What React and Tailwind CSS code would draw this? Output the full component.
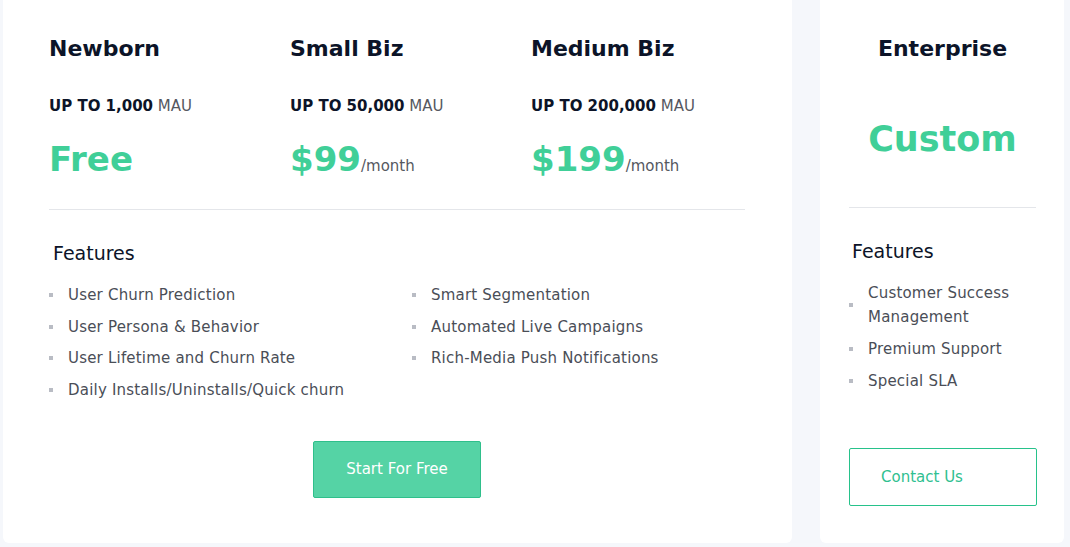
import React from "react";

const plans = [
  { name: "Newborn", limit: "UP TO 1,000", price: "Free", per: false },
  { name: "Small Biz", limit: "UP TO 50,000", price: "$99", per: true },
  { name: "Medium Biz", limit: "UP TO 200,000", price: "$199", per: true },
];

const leftFeatures = [
  "User Churn Prediction",
  "User Persona & Behavior",
  "User Lifetime and Churn Rate",
  "Daily Installs/Uninstalls/Quick churn",
];

const rightFeatures = [
  "Smart Segmentation",
  "Automated Live Campaigns",
  "Rich-Media Push Notifications",
];

const enterpriseFeatures = [
  "Customer Success Management",
  "Premium Support",
  "Special SLA",
];

const Bullet = () => (
  <span className="w-[4px] h-[4px] bg-[#b9bcc4] shrink-0" />
);

const FeatureItem = ({ text }) => (
  <li className="flex items-center gap-[15px] text-[15px] leading-[24px] text-[#4a4e57] tracking-[0.2px]">
    <Bullet />
    <span>{text}</span>
  </li>
);

const App = () => {
  return (
    <div
      className="w-[1070px] h-[547px] bg-[#f5f7fb] flex pl-[3px] overflow-hidden"
      style={{ fontFamily: '"DejaVu Sans", sans-serif' }}
    >
      {/* plans card */}
      <div className="w-[789px] h-[543px] bg-white rounded-b-md pl-[46px] pt-[33px]">
        <div className="grid grid-cols-[241px_241px_214px] w-[696px]">
          {plans.map((p) => (
            <div key={p.name}>
              <h2 className="text-[22px] leading-8 font-bold text-[#0c1428]">
                {p.name}
              </h2>
              <p className="mt-[31px] text-[15px] leading-5 text-[#0c1428]">
                <span className="font-bold">{p.limit}</span>{" "}
                <span className="text-[#55585f]">MAU</span>
              </p>
              <div className="mt-[21px] h-[44px] flex items-baseline text-[#40cf98]">
                <span className="text-[34px] leading-[44px] font-bold">
                  {p.price}
                </span>
                {p.per && (
                  <span className="text-[15px] leading-5 text-[#55585f]">
                    /month
                  </span>
                )}
              </div>
            </div>
          ))}
        </div>

        <div className="mt-[28px] w-[696px] h-px bg-[#e4e6ea]" />

        <h3 className="mt-[30px] ml-[4px] text-[19px] leading-[26px] text-[#0c1428]">
          Features
        </h3>

        <div className="mt-[17px] grid grid-cols-[363px_333px] w-[696px]">
          <ul className="flex flex-col gap-[7.7px]">
            {leftFeatures.map((f) => (
              <FeatureItem key={f} text={f} />
            ))}
          </ul>
          <ul className="flex flex-col gap-[7.7px]">
            {rightFeatures.map((f) => (
              <FeatureItem key={f} text={f} />
            ))}
          </ul>
        </div>

        <div className="w-[696px] flex justify-center mt-[39px]">
          <button className="w-[168px] h-[57px] bg-[#55d3a5] border border-[#2fbf8b] rounded-[2px] text-white text-[15px]">
            Start For Free
          </button>
        </div>
      </div>

      {/* enterprise card */}
      <div className="ml-[28px] w-[244px] h-[543px] bg-white rounded-b-md pl-[29px] pr-[28px] pt-[33px]">
        <h2 className="text-center text-[22px] leading-8 font-bold text-[#0c1428]">
          Enterprise
        </h2>
        <p className="mt-[52px] text-center text-[35px] leading-[44px] font-bold text-[#40cf98]">
          Custom
        </p>
        <div className="mt-[46px] h-px bg-[#e4e6ea]" />
        <h3 className="mt-[30px] ml-[3px] text-[19px] leading-[26px] text-[#0c1428]">
          Features
        </h3>
        <ul className="mt-[17px] flex flex-col gap-2">
          {enterpriseFeatures.map((f) => (
            <FeatureItem key={f} text={f} />
          ))}
        </ul>
        <button className="mt-[55px] w-[188px] h-[58px] border border-[#27c28b] rounded-[2px] text-left pl-[31px] text-[15px] text-[#2fc090]">
          Contact Us
        </button>
      </div>
    </div>
  );
};

export default App;
